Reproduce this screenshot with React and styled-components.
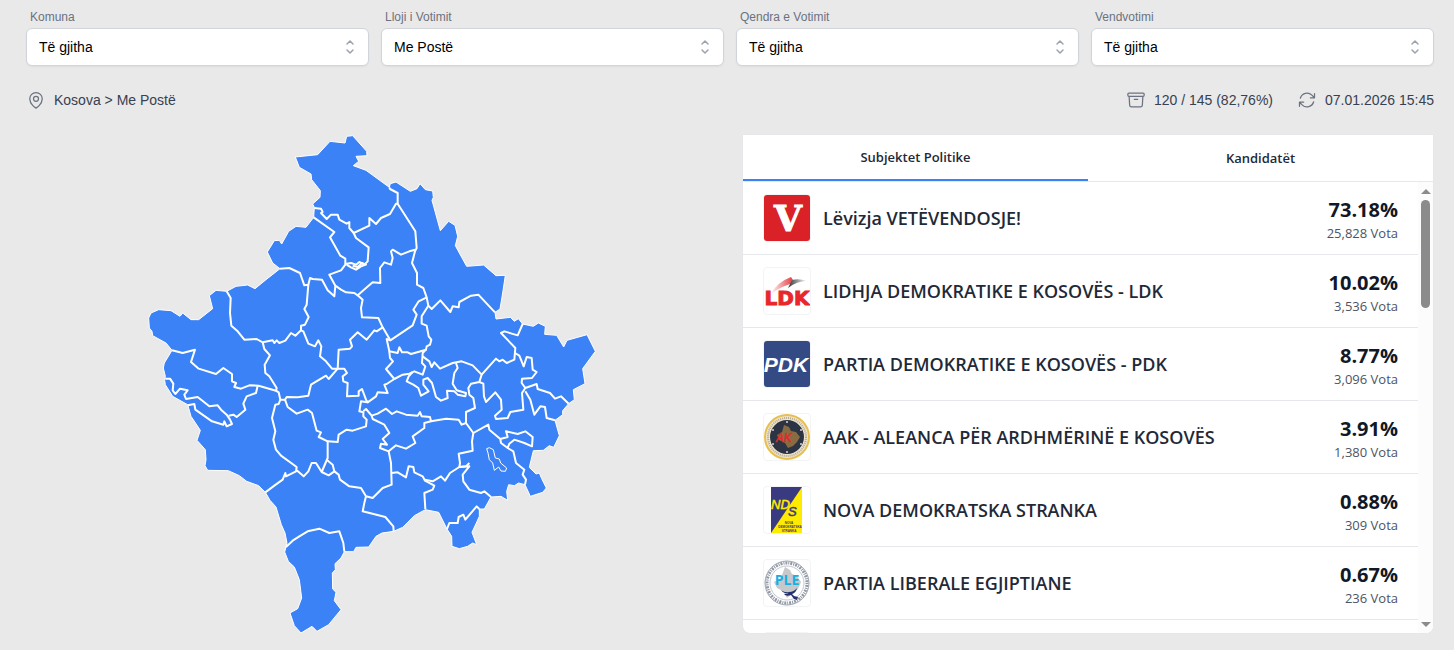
import React, { useRef, useState } from "react";
import styled, { createGlobalStyle, css } from "styled-components";
import {
  HiOutlineArchiveBox,
  HiOutlineArrowPath,
  HiOutlineMapPin,
} from "react-icons/hi2";

const filters = [
  { id: "komuna", label: "Komuna", value: "Të gjitha" },
  { id: "lloji", label: "Lloji i Votimit", value: "Me Postë" },
  { id: "qendra", label: "Qendra e Votimit", value: "Të gjitha" },
  { id: "vendvotimi", label: "Vendvotimi", value: "Të gjitha" },
];

const outline =
  "M468,82 535,75 572,35 617,40 622,20 640,18 682,65 683,78 650,80 658,95 642,108 680,122 750,173 753,162 770,157 813,185 833,177 842,162 858,180 880,184 882,203 878,212 903,303 928,275 947,287 955,320 948,348 982,410 1033,406 1070,438 1098,437 1090,490 1082,538 1067,548 1070,568 1113,563 1125,575 1137,567 1150,583 1182,590 1197,580 1218,590 1216,614 1252,617 1273,652 1283,632 1343,615 1368,665 1330,717 1337,762 1302,780 1305,810 1288,822 1270,843 1270,855 1247,872 1260,918 1243,953 1230,948 1212,962 1182,963 1170,1013 1190,1033 1200,1030 1207,1047 1221,1075 1210,1088 1173,1100 1157,1065 1138,1060 1125,1068 1108,1065 1102,1085 1105,1112 1085,1100 1055,1102 1035,1138 1020,1138 1020,1160 1010,1182 998,1208 1012,1245 1000,1240 985,1250 960,1257 938,1250 937,1220 923,1198 898,1148 858,1140 825,1158 790,1193 763,1205 728,1210 710,1220 688,1252 650,1253 643,1266 615,1266 605,1285 587,1302 588,1320 579,1330 580,1378 590,1388 585,1413 605,1440 568,1485 533,1505 518,1490 485,1510 465,1488 452,1450 475,1437 487,1405 480,1350 465,1312 447,1295 436,1267 443,1240 437,1210 426,1185 410,1132 392,1112 378,1088 358,1068 322,1055 300,1038 267,1023 205,1022 197,1008 200,990 198,960 173,932 183,902 155,860 145,825 100,800 78,765 76,752 78,740 72,715 75,700 98,662 80,640 40,618 38,605 30,595 28,565 35,550 58,540 95,543 122,560 130,550 155,570 178,570 220,537 210,498 230,482 262,485 290,470 325,466 347,477 380,450 422,417 400,400 384,367 405,333 420,332 427,343 448,305 470,290 500,293 523,263 525,233 520,223 542,203 543,183 517,150 515,133 480,113Z";

const borders = [
  "525,235 545,237 550,247 545,250 562,268 575,255 595,255 600,270 622,282 630,277 630,295 643,310 690,288 690,265 710,283 725,265 752,253 770,222 775,222 775,190 752,178 750,173",
  "775,222 828,305 832,355 827,365 818,400 833,430 833,465 852,475 862,503 867,528 877,538 903,512 933,547 940,530 958,533 960,517 995,498 1017,495 1067,548",
  "523,263 585,307 572,323 603,378 618,387 618,405 605,422 570,435 588,468",
  "643,310 650,325 688,353 685,395 675,405 660,397 650,405 635,400 618,403",
  "622,405 635,413 650,420 665,410 680,405 668,400 655,412 640,408",
  "828,360 810,365 785,375 760,360 755,365 760,385 755,405 735,398 722,415 723,460 700,458 680,475 663,490 655,497 645,490 620,488 605,480 588,468 585,500 565,482 548,450 520,448 512,445 507,465 495,467 482,430 450,415 422,417",
  "262,485 274,505 272,550 276,588 295,605 315,630 352,628 370,638 400,632 405,640 412,632 420,640 438,633 455,610 468,618 485,602 485,588 497,585 508,562 495,538 502,525 507,465",
  "370,638 375,658 392,677 376,705 378,730 390,740 412,775 410,783 418,788 423,810 437,810 442,802 475,803 507,798 515,765 540,750 560,738 568,748 595,717",
  "485,602 492,605 507,642 527,650 537,632 546,650 542,680 560,695 578,717 595,717",
  "595,717 598,660 632,657 638,650 632,630 655,608 682,630 705,602 712,605 730,593 717,565 668,563 665,535 670,510 655,497",
  "730,593 753,632 820,587 832,555 822,540 838,515 862,503",
  "867,528 847,560 847,582 862,588 868,620 876,630 872,645 862,650 860,660 815,673 805,668 788,668 780,653 775,670 750,665 742,628 753,632",
  "750,665 752,685 761,695 740,718 765,748 742,763 735,765 745,790 715,788 710,800 685,818 680,810 668,778 658,785 658,798 623,800 625,760 612,755 610,740 623,730 615,717 595,717",
  "765,748 790,735 810,732 825,725 850,735 858,710 848,700 850,670 860,660",
  "850,680 870,695 877,712 885,698 902,717 940,700 967,695 1000,707 1027,735 1020,757 995,762 987,775 990,795 1002,805 1007,835 980,847 980,880",
  "950,700 955,715 945,730 940,762 952,782 980,790 978,800 955,795 945,785 923,783 925,805 905,813 890,802 878,760 865,745 852,750 852,765 868,785 845,798 837,775 822,765 802,755 808,740 820,727",
  "1027,735 1070,687 1080,695 1090,690 1102,700 1125,690 1128,655 1085,610 1095,605 1135,617 1150,583",
  "1127,670 1140,678 1153,710 1162,682 1177,685 1180,720 1192,727 1178,745 1148,747 1147,760 1158,775 1192,763 1195,778 1232,790 1247,807 1265,800 1288,822",
  "1158,775 1148,790 1152,840 1113,847 1105,865 1070,868 1067,858 1087,840 1085,810 1068,788 1040,817 1034,800 1032,762 1020,757",
  "1158,785 1173,810 1185,855 1203,830 1217,832 1222,865 1247,872",
  "98,662 130,670 167,660 155,697 178,717 230,733 252,715 278,733 278,755 290,760 285,772 305,777 330,767 358,768 410,783",
  "355,768 350,790 322,800 312,822 318,840 292,862 282,855 268,858",
  "78,747 92,747 102,762 100,782 108,793 122,777 145,782 135,795 140,808 175,802 210,830 235,827 245,840 262,855 272,870 278,883 262,890 255,875 252,885 218,875 168,840 165,823 145,827",
  "423,810 418,823 408,825 398,865 408,905 402,930 410,960 425,978 472,1012 470,1025 440,1040 438,1030 430,1050 405,1068 378,1088",
  "437,810 445,832 472,852 505,840 518,850 532,903 545,908 538,922 565,935 565,985 547,1027 530,1000 517,1000 507,1025 493,1040 472,1022",
  "565,935 595,937 598,915 622,900 640,903 680,890 682,870 672,860 672,848 660,845 665,815 683,818",
  "562,990 580,1005 585,1025 568,1037 547,1027",
  "585,1025 598,1035 602,1050 630,1070 665,1075 680,1100 700,1105 730,1075 757,1065 755,1000 748,965 722,955 725,942 743,945 730,928 750,910 735,885 700,868 697,858 680,838 672,845",
  "680,1100 675,1120 670,1145 738,1162 762,1190 763,1205",
  "697,858 715,852 740,837 758,853 772,845 800,855 835,858 842,847 847,860 872,862 875,875 920,867 958,870 967,885 980,880 1002,910",
  "875,875 855,880 855,895 820,920 828,940 800,957 770,947 748,965",
  "757,1030 775,1028 800,1043 808,1010 822,1012 825,1028 850,1040 857,1053 885,1068 880,1080 855,1090 858,1138",
  "857,1050 880,1055 905,1040 917,1053 932,1030 960,1012 990,1010 970,1035 972,1055 990,1080 1025,1090 1035,1085 1055,1102",
  "990,1000 980,1010 960,1012 962,1000 958,972 1000,963 998,935 1002,910",
  "1002,910 1047,885 1050,900 1083,928 1105,922 1100,905 1135,913 1158,905 1180,922 1178,950 1155,940 1125,930 1110,942 1105,955 1085,940 1083,928",
  "1105,955 1122,965 1130,1000 1155,1020 1150,1035 1160,1050 1157,1065",
  "1020,1138 1012,1130 978,1170 972,1155 958,1162 955,1180 930,1180 923,1198",
  "440,1252 460,1233 480,1220 505,1205 540,1197 570,1210 600,1205 612,1240 615,1266",
];

const enclave =
  "M1042,957 1050,954 1062,960 1068,985 1080,988 1084,1000 1102,1015 1098,1025 1085,1024 1078,1012 1065,1022 1060,1000 1050,990 1046,970Z";

const VetevendosjeLogo = () => (
  <svg viewBox="0 0 46 46" aria-hidden="true">
    <rect width="46" height="46" fill="#da2128" />
    <text x="24" y="36" textAnchor="middle" fontFamily="DejaVu Serif" fontWeight="700" fontSize="36" fill="#fff" stroke="#fff" strokeWidth="1">
      V
    </text>
  </svg>
);

const LdkLogo = () => (
  <svg viewBox="0 0 46 46" aria-hidden="true">
    <defs>
      <linearGradient id="ldkRed" x1="0" x2="1">
        <stop offset="0" stopColor="#fff" />
        <stop offset="1" stopColor="#e52a2f" />
      </linearGradient>
      <linearGradient id="ldkGrey" x1="0" x2="1">
        <stop offset="0" stopColor="#333" />
        <stop offset="1" stopColor="#fff" />
      </linearGradient>
    </defs>
    <path d="M6 27Q13 14 27 9L31 15Q18 17 6 27Z" fill="url(#ldkRed)" />
    <path d="M24 20L28 12Q35 10 43 13Q33 13 24 20Z" fill="url(#ldkGrey)" />
    <text x="23" y="37" textAnchor="middle" fontFamily="DejaVu Sans" fontWeight="700" fontSize="20" fill="#e8262b" stroke="#e8262b" strokeWidth="1">
      LDK
    </text>
  </svg>
);

const PdkLogo = () => (
  <svg viewBox="0 0 46 46" aria-hidden="true">
    <rect width="46" height="46" fill="#344a84" />
    <text x="22" y="31" textAnchor="middle" fontFamily="Liberation Sans" fontWeight="700" fontStyle="italic" fontSize="21" fill="#fff">
      PDK
    </text>
  </svg>
);

const AakLogo = () => (
  <svg viewBox="0 0 46 46" aria-hidden="true">
    <circle cx="23" cy="23" r="22" fill="#efe4cf" stroke="#e6c04e" strokeWidth="2" />
    <circle cx="23" cy="23" r="19" fill="none" stroke="#b8aa94" strokeWidth="2" strokeDasharray="1 1" />
    <circle cx="23" cy="23" r="17" fill="#2c3342" />
    <path d="M20 11L25 13 27 17 32 18 36 23 33 28 29 32 24 34 21 29 15 26 13 21 18 18Z" fill="#876b42" />
    <g fill="#fff" opacity="0.8">
      <circle cx="23" cy="8" r="1" />
      <circle cx="9" cy="16" r="1" />
      <circle cx="9" cy="30" r="1" />
      <circle cx="37" cy="16" r="1" />
      <circle cx="37" cy="30" r="1" />
      <circle cx="23" cy="38" r="1" />
    </g>
    <text x="20" y="28" textAnchor="middle" fontFamily="Liberation Sans" fontStyle="italic" fontSize="12" fill="#e02a30" stroke="#e02a30" strokeWidth="0.5">
      AK
    </text>
  </svg>
);

const NdsLogo = () => (
  <svg viewBox="0 0 46 46" aria-hidden="true">
    <rect x="7" width="31" height="46" fill="#ffeb00" />
    <path d="M7 0H38L7 46Z" fill="#3a3a80" />
    <text x="7" y="22" fontFamily="Liberation Sans" fontStyle="italic" fontSize="13" fill="#ffeb00" stroke="#ffeb00" strokeWidth="0.5">
      ND
      <tspan x="24" dy="7" fill="#3a3a80" stroke="#3a3a80">
        S
      </tspan>
    </text>
    <g fontFamily="Liberation Sans" fontWeight="700" fontSize="3" fill="#3a3a60" textAnchor="middle">
      <text x="25" y="37">NOVA</text>
      <text x="26" y="41">DEMOKRATSKA</text>
      <text x="25" y="45">STRANKA</text>
    </g>
  </svg>
);

const PleLogo = () => (
  <svg viewBox="0 0 46 46" aria-hidden="true">
    <circle cx="23" cy="23" r="22" fill="#fff" stroke="#9ca3af" strokeWidth="1" />
    <circle cx="23" cy="23" r="20" fill="none" stroke="#9299a5" strokeWidth="3" strokeDasharray="1 1 2 1" />
    <circle cx="23" cy="23" r="17" fill="none" stroke="#c3c7cd" strokeWidth="1" />
    <path d="M21 7L26 10 28 14 33 16 37 22 34 29 28 34 23 38 19 31 13 28 10 22 17 18Z" fill="#c6c8ca" />
    <text x="23" y="25" textAnchor="middle" fontFamily="Open Sans" fontWeight="700" fontSize="14" fill="#19aee5">
      PLE
    </text>
    <path d="M17 30Q21 33 25 32Q30 32 33 28Q32 33 28 34L30 36 34 37 33 40 30 39 27 35Q22 37 20 34Q24 34 25 33Q20 34 17 30Z" fill="#23306b" />
  </svg>
);

const parties = [
  { name: "Lëvizja VETËVENDOSJE!", percent: "73.18%", votes: "25,828", Logo: VetevendosjeLogo },
  { name: "LIDHJA DEMOKRATIKE E KOSOVËS - LDK", percent: "10.02%", votes: "3,536", Logo: LdkLogo },
  { name: "PARTIA DEMOKRATIKE E KOSOVËS - PDK", percent: "8.77%", votes: "3,096", Logo: PdkLogo },
  { name: "AAK - ALEANCA PËR ARDHMËRINË E KOSOVËS", percent: "3.91%", votes: "1,380", Logo: AakLogo },
  { name: "NOVA DEMOKRATSKA STRANKA", percent: "0.88%", votes: "309", Logo: NdsLogo },
  { name: "PARTIA LIBERALE EGJIPTIANE", percent: "0.67%", votes: "236", Logo: PleLogo },
];

function Filter({ id, label, value }) {
  return (
    <FilterStyled>
      <label htmlFor={id}>{label}</label>
      <div className="select-box">
        <select id={id} defaultValue={value}>
          <option>{value}</option>
        </select>
        <svg viewBox="0 0 20 20" aria-hidden="true">
          <path d="M7 7l3-3 3 3m0 6l-3 3-3-3" />
        </svg>
      </div>
    </FilterStyled>
  );
}

function KosovoMap() {
  return (
    <MapStyled viewBox="23 13 1350 1500" role="img" aria-label="Kosova">
      <path className="land" d={outline} />
      {borders.map((points) => (
        <polyline key={points} points={points} />
      ))}
      <path className="enclave" d={enclave} />
    </MapStyled>
  );
}

function Results() {
  const listRef = useRef(null);
  const [tab, setTab] = useState("subjektet");
  const scroll = (step) => listRef.current.scrollBy({ top: step });

  return (
    <Panel>
      <Tabs role="tablist">
        <Tab role="tab" $active={tab === "subjektet"} onClick={() => setTab("subjektet")}>
          Subjektet Politike
        </Tab>
        <Tab role="tab" $active={tab === "kandidatet"} onClick={() => setTab("kandidatet")}>
          Kandidatët
        </Tab>
      </Tabs>
      <ListArea>
        <List ref={listRef}>
          {parties.map(({ name, percent, votes, Logo }) => (
            <Party key={name}>
              <LogoBox>
                <Logo />
              </LogoBox>
              <h3>{name}</h3>
              <Score>
                <strong>{percent}</strong>
                <span>{votes} Vota</span>
              </Score>
            </Party>
          ))}
          <Party>
            <LogoBox />
          </Party>
        </List>
        <Scrollbar>
          <Arrow aria-label="Lart" onClick={() => scroll(-73)} />
          <div className="track">
            <div className="thumb" />
          </div>
          <Arrow $down aria-label="Poshtë" onClick={() => scroll(73)} />
        </Scrollbar>
      </ListArea>
    </Panel>
  );
}

function App() {
  return (
    <>
      <GlobalStyle />
      <Page>
        <Filters>
          {filters.map((filter) => (
            <Filter key={filter.id} {...filter} />
          ))}
        </Filters>
        <StatusBar>
          <Status>
            <HiOutlineMapPin />
            Kosova &gt; Me Postë
          </Status>
          <div className="right">
            <Status>
              <HiOutlineArchiveBox />
              120 / 145 (82,76%)
            </Status>
            <Status>
              <HiOutlineArrowPath />
              07.01.2026 15:45
            </Status>
          </div>
        </StatusBar>
        <Content>
          <KosovoMap />
          <Results />
        </Content>
      </Page>
    </>
  );
}

const GlobalStyle = createGlobalStyle`
  * {
    box-sizing: border-box;
    margin: 0;
    padding: 0;
  }

  body {
    background-color: #e9e9e9;
    font-family: "Liberation Sans", Arial, sans-serif;
    font-size: 14px;
    line-height: 20px;
    color: #374151;
  }

  button,
  select {
    font: inherit;
    border: 0;
    background: none;
    cursor: pointer;
  }
`;

const Page = styled.main`
  padding: 9px 20px 16px 26px;
`;

const Filters = styled.div`
  display: grid;
  grid-template-columns: repeat(4, 1fr);
  gap: 12px;
`;

const FilterStyled = styled.div`
  label {
    display: block;
    padding: 0 4px 3px;
    font-size: 12px;
    line-height: 16px;
    color: #6b7280;
  }

  .select-box {
    display: grid;
    align-items: center;
  }

  select,
  svg {
    grid-area: 1 / 1;
  }

  select {
    appearance: none;
    width: 100%;
    height: 38px;
    padding: 0 40px 0 12px;
    color: #000;
    background-color: #fff;
    border: 1px solid #d1d5db;
    border-radius: 6px;
    box-shadow: 0 1px 2px rgba(0, 0, 0, 0.05);
  }

  svg {
    justify-self: end;
    width: 20px;
    margin-right: 9px;
    fill: none;
    stroke: #9ca3af;
    stroke-width: 1.5;
    stroke-linecap: round;
    stroke-linejoin: round;
    pointer-events: none;
  }
`;

const StatusBar = styled.div`
  display: flex;
  justify-content: space-between;
  padding: 24px 0;

  .right {
    display: flex;
    gap: 24px;
  }
`;

const Status = styled.div`
  display: flex;
  align-items: center;
  gap: 8px;

  svg {
    width: 20px;
    height: 20px;
    color: #6b7280;
  }
`;

const Content = styled.div`
  display: grid;
  grid-template-columns: 1fr 1fr;
  gap: 24px;
`;

const MapStyled = styled.svg`
  width: 100%;
  height: calc(100vh - 150px);
  min-height: 320px;

  .land {
    fill: #3b82f6;
    stroke: #fff;
    stroke-width: 3;
  }

  polyline,
  .enclave {
    fill: none;
    stroke: #fff;
    stroke-width: 6;
    stroke-linejoin: round;
  }

  .enclave {
    stroke-width: 3;
  }
`;

const Panel = styled.section`
  display: flex;
  flex-direction: column;
  height: calc(100vh - 150px);
  min-height: 320px;
  background-color: #fff;
  border: 1px solid #e5e7eb;
  border-radius: 0 0 8px 8px;
  overflow: hidden;
  font-family: "Segoe UI", "Open Sans", "Noto Sans", sans-serif;
`;

const Tabs = styled.div`
  display: grid;
  grid-template-columns: 1fr 1fr;
  border-bottom: 1px solid #e5e7eb;
`;

const Tab = styled.button`
  height: 46px;
  font-size: 13px;
  font-weight: 600;
  color: #1f2937;
  ${({ $active }) =>
    $active &&
    css`
      border-bottom: 2px solid #3b82f6;
    `}
`;

const ListArea = styled.div`
  display: flex;
  flex: 1;
  min-height: 0;
`;

const List = styled.ul`
  flex: 1;
  overflow-y: auto;
  scrollbar-width: none;
  list-style: none;
`;

const Party = styled.li`
  display: flex;
  align-items: center;
  gap: 12px;
  height: 73px;
  padding: 0 20px;
  border-bottom: 1px solid #e5e7eb;

  h3 {
    flex: 1;
    font-size: 18px;
    font-weight: 640;
    line-height: 28px;
    color: #1f2937;
  }
`;

const LogoBox = styled.div`
  width: 48px;
  height: 48px;
  border: 1px solid #f3f4f6;
  border-radius: 4px;
  overflow: hidden;

  svg {
    display: block;
    width: 46px;
    height: 46px;
  }
`;

const Score = styled.div`
  display: flex;
  flex-direction: column;
  padding-top: 2px;
  text-align: right;

  strong {
    font-size: 20px;
    font-weight: 700;
    line-height: 28px;
    color: #111827;
  }

  span {
    font-size: 13px;
    line-height: 18px;
    color: #4b5563;
  }
`;

const Scrollbar = styled.div`
  display: flex;
  flex-direction: column;
  align-items: center;
  width: 15px;
  background-color: #fcfcfc;

  .track {
    flex: 1;
  }

  .thumb {
    width: 9px;
    height: 26%;
    border-radius: 5px;
    background-color: #8b8b8b;
  }
`;

const Arrow = styled.button`
  display: flex;
  justify-content: center;
  align-items: center;
  width: 15px;
  height: 18px;

  &::before {
    content: "";
    border: 5px solid transparent;
    border-top-width: 0;
    border-bottom: 5px solid #8b8b8b;
    ${({ $down }) => $down && "transform: rotate(180deg);"}
  }
`;

export default App;
